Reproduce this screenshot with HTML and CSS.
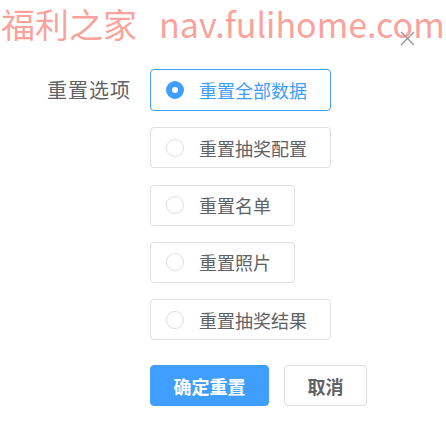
FILE: index.html
```html
<!DOCTYPE html>
<html lang="zh-CN">
<head>
    <meta charset="UTF-8">
    <title>重置</title>
    <link rel="stylesheet" href="styles.css">
</head>
<body>
    <div class="dialog">
        <div class="dialog-header">
            <svg class="close" width="15" height="15" viewBox="0 0 15 15">
                <path d="M1 1 L14 14 M14 1 L1 14" stroke="#909399" stroke-width="1.3" fill="none"/>
            </svg>
        </div>
        <div class="form-row">
            <div class="form-label">重置选项</div>
            <div class="options">
                <label class="radio checked"><span class="dot"></span><span class="txt">重置全部数据</span></label>
                <label class="radio"><span class="dot"></span><span class="txt">重置抽奖配置</span></label>
                <label class="radio"><span class="dot"></span><span class="txt">重置名单</span></label>
                <label class="radio"><span class="dot"></span><span class="txt">重置照片</span></label>
                <label class="radio"><span class="dot"></span><span class="txt">重置抽奖结果</span></label>
            </div>
        </div>
        <div class="footer">
            <button class="btn primary">确定重置</button>
            <button class="btn">取消</button>
        </div>
    </div>
    <div class="watermark"><span>福利之家</span><span>nav.fulihome.com</span></div>
</body>
</html>
```

FILE: styles.css
```css
html, body {
    margin: 0;
    height: 100%;
    background: #fff;
}
body {
    position: relative;
    overflow: hidden;
    font-family: "Noto Sans CJK SC", "Noto Sans", sans-serif;
    color: #606266;
}
.dialog-header {
    height: 69px;
    box-sizing: border-box;
    padding: 31px 31px 0 0;
    display: flex;
    justify-content: flex-end;
    align-items: flex-start;
}
.form-row {
    display: flex;
}
.form-label {
    width: 131px;
    text-align: right;
    font-size: 20px;
    line-height: 42px;
    height: 42px;
    color: #606266;
    letter-spacing: 1px;
}
.options {
    margin-left: 19px;
    display: flex;
    flex-direction: column;
    align-items: flex-start;
    gap: 16.25px;
}
.radio {
    display: flex;
    align-items: center;
    height: 41px;
    box-sizing: border-box;
    padding: 0 23px 0 15px;
    border: 1px solid #dcdfe6;
    border-radius: 4px;
    font-size: 18px;
    color: #606266;
}
.radio .dot {
    width: 18px;
    height: 18px;
    box-sizing: border-box;
    border: 1px solid #dcdfe6;
    border-radius: 50%;
    margin-right: 15px;
    background: #fff;
}
.radio.checked {
    border-color: #409eff;
    height: 42px;
    color: #409eff;
}
.radio.checked .dot {
    border: 6px solid #409eff;
}
.footer {
    display: flex;
    gap: 15px;
    margin: 25px 0 0 150px;
}
.btn {
    height: 41px;
    border: 1px solid #dcdfe6;
    border-radius: 4px;
    background: #fff;
    color: #606266;
    font-family: "Noto Sans CJK SC", sans-serif;
    font-size: 18px;
    font-weight: bold;
    width: 83px;
    padding: 0;
}
.btn.primary {
    width: 119px;
    background: #409eff;
    border-color: #409eff;
    color: #fff;
}
.watermark {
    position: absolute;
    top: 0;
    left: 1px;
    display: flex;
    gap: 22px;
    white-space: nowrap;
    font-family: "Noto Sans CJK SC", "Noto Sans", sans-serif;
    font-size: 34px;
    line-height: 48px;
    color: rgba(248, 120, 110, 0.7);
}
```
